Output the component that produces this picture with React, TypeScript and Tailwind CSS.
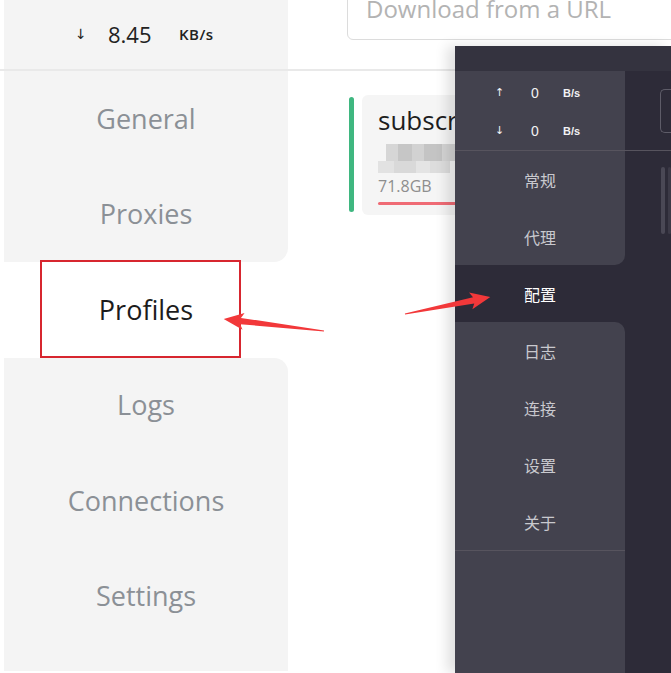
const navItems = ["General", "Proxies", "Profiles", "Logs", "Connections", "Settings"];
const darkItems = ["常规", "代理", "配置", "日志", "连接", "设置", "关于"];

const SELECTED = 2;

function navClass(i: number) {
  if (i === SELECTED) return "flex h-[95.5px] items-center justify-center bg-white text-[#1c1c1c]";
  if (i === SELECTED - 1)
    return "flex h-[95.5px] items-center justify-center rounded-br-[14px] bg-[#f4f4f4] text-[#8b9096]";
  if (i === SELECTED + 1)
    return "flex h-[95.5px] items-center justify-center rounded-tr-[14px] bg-[#f4f4f4] text-[#8b9096]";
  return "flex h-[95.5px] items-center justify-center bg-[#f4f4f4] text-[#8b9096]";
}

function darkClass(i: number) {
  if (i === SELECTED) return "flex h-[57px] items-center justify-center bg-[#2d2b38] text-white";
  if (i === SELECTED - 1)
    return "flex h-[57px] items-center justify-center rounded-br-[10px] bg-[#43424e] text-[#c9c9ce]";
  if (i === SELECTED + 1)
    return "flex h-[57px] items-center justify-center rounded-tr-[10px] bg-[#43424e] text-[#c9c9ce]";
  return "flex h-[57px] items-center justify-center bg-[#43424e] text-[#c9c9ce]";
}

function Arrow({ x, y, angle, length }: { x: number; y: number; angle: number; length: number }) {
  const h = length - 17;
  return (
    <g transform={`translate(${x} ${y}) rotate(${angle})`}>
      <polygon
        points={`0,-0.6 ${h},-3.2 ${h - 3},-8.5 ${length},0 ${h - 3},8.5 ${h},3.2 0,0.6`}
        fill="#f2383a"
      />
    </g>
  );
}

function DarkWindow() {
  return (
    <div className="absolute bottom-0 left-[455px] right-0 top-[46px] flex flex-col shadow-[-8px_0_12px_rgba(0,0,0,0.12)]">
      <div className="h-[25px] shrink-0 bg-[#34333f]" />
      <div className="flex flex-1">
        <div className="flex w-[170px] shrink-0 flex-col bg-[#2d2b38] font-['Noto_Sans_CJK_SC',sans-serif] text-[16px]">
          <div className="flex h-[80px] flex-col justify-center border-b border-[#57545e] bg-[#43424e] pl-[40px] pt-[3px] font-['Liberation_Sans',sans-serif] text-[#f2f2f4]">
            <div className="flex h-[40px] items-center">
              <span className="w-[36px] font-['DejaVu_Sans',sans-serif] text-[11px]">↑</span>
              <span className="w-[32px] text-[14px]">0</span>
              <span className="text-[11px] font-bold">B/s</span>
            </div>
            <div className="flex h-[40px] items-center">
              <span className="w-[36px] font-['DejaVu_Sans',sans-serif] text-[11px]">↓</span>
              <span className="w-[32px] text-[14px]">0</span>
              <span className="text-[11px] font-bold">B/s</span>
            </div>
          </div>
          {darkItems.map((t, i) => (
            <div key={t} className={darkClass(i)}>
              {t}
            </div>
          ))}
          <div className="flex-1 border-t border-[#57545e] bg-[#43424e]" />
        </div>
        <div className="flex min-w-0 flex-1 flex-col bg-[#2d2b38]">
          <div className="h-[80px] border-b border-[#57545e] pl-[35px] pt-[18px]">
            <div className="h-[44px] w-[40px] rounded-l-[5px] border border-r-0 border-[#5e5c68]" />
          </div>
          <div className="flex gap-[3px] pl-[36px] pt-[16px]">
            <div className="h-[67px] w-[4px] rounded-full bg-[#4a4855]" />
            <div className="h-[67px] w-[3px] rounded-full bg-[#3c3a47]" />
          </div>
        </div>
      </div>
    </div>
  );
}

export default function App() {
  return (
    <div className="relative h-[673px] w-[671px] overflow-hidden bg-white font-['Open_Sans',sans-serif]">
      <div className="flex h-[71px] border-b-2 border-[#e9e9e9]">
        <div className="w-[4px] shrink-0" />
        <div className="flex w-[284px] shrink-0 items-center bg-[#f4f4f4] pl-[71px] text-[#222]">
          <span className="w-[33px] font-['DejaVu_Sans',sans-serif] text-[14px] text-[#222]">↓</span>
          <span className="w-[71px] text-[22px]">8.45</span>
          <span className="text-[15px] font-semibold tracking-[0.5px]">KB/s</span>
        </div>
        <div className="min-w-0 flex-1 pl-[59px]">
          <div className="-mt-[22px] flex h-[62px] w-[360px] items-center whitespace-nowrap rounded-[6px] border border-[#dcdcdc] pl-[18px] text-[24px] text-[#b3b3b3]">
            Download from a URL
          </div>
        </div>
      </div>

      <div className="flex h-[600px]">
        <div className="w-[4px] shrink-0" />
        <nav className="flex w-[284px] shrink-0 flex-col text-[27px]">
          {navItems.map((t, i) => (
            <div key={t} className={navClass(i)}>
              {t}
            </div>
          ))}
          <div className="flex-1 bg-[#f4f4f4]" />
        </nav>
        <main className="min-w-0 flex-1 pl-[61px] pt-[24px]">
          <div className="flex gap-[8px]">
            <div className="mt-[2px] h-[115px] w-[5px] shrink-0 rounded-full bg-[#3fb780]" />
            <div className="h-[120px] w-[300px] shrink-0 rounded-[6px] bg-[#f5f5f5] pl-[16px] pt-[6px]">
              <div className="whitespace-nowrap text-[26px] leading-[38px] text-[#1e1e1e]">subscription</div>
              <div className="mt-[5px] flex h-[17px] pl-[8px]">
                <div className="w-[12px] bg-[#d6d6d6]" />
                <div className="w-[14px] bg-[#c6c6c6]" />
                <div className="w-[12px] bg-[#d2d2d2]" />
                <div className="w-[18px] bg-[#c4c4c4]" />
                <div className="w-[14px] bg-[#d4d4d4]" />
                <div className="w-[20px] bg-[#dadada]" />
              </div>
              <div className="flex h-[12px]">
                <div className="w-[16px] bg-[#e2e2e2]" />
                <div className="w-[22px] bg-[#d9d9d9]" />
                <div className="w-[14px] bg-[#e4e4e4]" />
                <div className="w-[20px] bg-[#dddddd]" />
              </div>
              <div className="mt-[2px] text-[16px] leading-[22px] text-[#8e8e8e]">71.8GB</div>
              <div className="mt-[5px] h-[3px] rounded-full bg-[#ef6b75]" />
            </div>
          </div>
        </main>
      </div>

      <DarkWindow />

      <div className="absolute left-[40px] top-[260px] h-[98px] w-[201px] border-2 border-[#d7262f]" />
      <svg className="pointer-events-none absolute inset-0" width="671" height="673">
        <Arrow x={324} y={331} angle={186.8} length={101} />
        <Arrow x={405} y={314} angle={-11.3} length={87} />
      </svg>
    </div>
  );
}
